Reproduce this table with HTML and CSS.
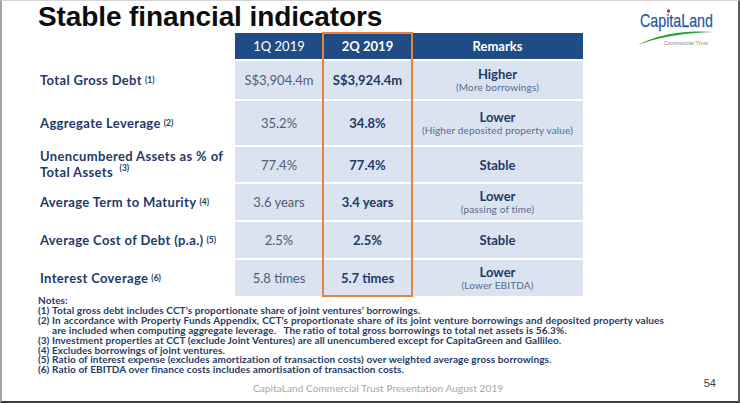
FILE: index.html
```html
<!DOCTYPE html>
<html lang="en">
<head>
<meta charset="utf-8">
<title>Stable financial indicators</title>
<link rel="stylesheet" href="styles.css">
</head>
<body>
<div class="slide">
  <header class="top">
    <h1 class="title">Stable financial indicators</h1>
    <svg class="logo" width="84" height="42" viewBox="0 0 84 42" aria-label="CapitaLand Commercial Trust">
      <text x="6" y="19" class="logo-name" textLength="73" lengthAdjust="spacingAndGlyphs">CapitaLand</text>
      <circle cx="34.5" cy="3" r="1.7" fill="#e0262b"/>
      <path d="M4 37.5 C18 28 48 21.5 80 24 C48 24.8 20 30 4 37.5 Z" fill="#2e9e3a"/>
      <text x="30" y="37" class="logo-sub" textLength="44" lengthAdjust="spacingAndGlyphs">Commercial Trust</text>
    </svg>
  </header>

  <div class="table-wrap">
    <div class="table">
      <div class="corner"></div>
      <div class="th">1Q 2019</div>
      <div class="th th-b">2Q 2019</div>
      <div class="th th-b">Remarks</div>

      <div class="lbl">Total Gross Debt <sup>(1)</sup></div>
      <div class="c1">S$3,904.4m</div>
      <div class="c2">S$3,924.4m</div>
      <div class="rm"><b>Higher</b><span>(More borrowings)</span></div>

      <div class="lbl">Aggregate Leverage <sup>(2)</sup></div>
      <div class="c1">35.2%</div>
      <div class="c2">34.8%</div>
      <div class="rm"><b>Lower</b><span>(Higher deposited property value)</span></div>

      <div class="lbl lbl-2">Unencumbered Assets as % of<br>Total Assets <sup>(3)</sup></div>
      <div class="c1">77.4%</div>
      <div class="c2">77.4%</div>
      <div class="rm"><b>Stable</b></div>

      <div class="lbl">Average Term to Maturity <sup>(4)</sup></div>
      <div class="c1">3.6 years</div>
      <div class="c2">3.4 years</div>
      <div class="rm"><b>Lower</b><span>(passing of time)</span></div>

      <div class="lbl">Average Cost of Debt (p.a.) <sup>(5)</sup></div>
      <div class="c1">2.5%</div>
      <div class="c2">2.5%</div>
      <div class="rm"><b>Stable</b></div>

      <div class="lbl">Interest Coverage <sup>(6)</sup></div>
      <div class="c1">5.8 times</div>
      <div class="c2">5.7 times</div>
      <div class="rm"><b>Lower</b><span>(Lower EBITDA)</span></div>
    </div>
    <div class="hl"></div>
  </div>

  <div class="notes">
    <p class="notes-h">Notes:</p>
    <ol class="notes-list">
      <li><span class="num">(1)</span>Total gross debt includes CCT’s proportionate share of joint ventures’ borrowings.</li>
      <li><span class="first"><span class="num">(2)</span>In accordance with Property Funds Appendix, CCT’s proportionate share of its joint venture borrowings and deposited property values</span><span class="rest">are included when computing aggregate leverage.&nbsp;&nbsp; The ratio of total gross borrowings to total net assets is 56.3%.</span></li>
      <li><span class="num">(3)</span>Investment properties at CCT (exclude Joint Ventures) are all unencumbered except for CapitaGreen and Gallileo.</li>
      <li><span class="num">(4)</span>Excludes borrowings of joint ventures.</li>
      <li><span class="num">(5)</span>Ratio of interest expense (excludes amortization of transaction costs) over weighted average gross borrowings.</li>
      <li><span class="num">(6)</span>Ratio of EBITDA over finance costs includes amortisation of transaction costs.</li>
    </ol>
  </div>

  <footer class="foot">
    <span class="foot-text">CapitaLand Commercial Trust Presentation August 2019</span>
    <span class="page">54</span>
  </footer>
</div>
</body>
</html>
```

FILE: styles.css
```css
html, body {
  margin: 0;
  padding: 0;
  background: #ffffff;
}

.slide {
  box-sizing: border-box;
  width: 740px;
  height: 403px;
  border-top: 1px solid #d4d4d4;
  border-left: 2px solid #a3a3a3;
  border-right: 2px solid #5a5a5a;
  border-bottom: 2px solid #3c3c3c;
  display: flex;
  flex-direction: column;
  font-family: Lato, "Open Sans", Arial, sans-serif;
  overflow: hidden;
}

/* ---------- header ---------- */
.top {
  display: flex;
  justify-content: space-between;
  align-items: flex-start;
  height: 32px;
  flex: none;
}

.title {
  margin: 0;
  padding-left: 36px;
  font-family: "Liberation Sans", Arial, sans-serif;
  font-weight: bold;
  font-size: 28px;
  line-height: 32px;
  color: #0d0d0d;
  letter-spacing: -0.1px;
}

.logo {
  display: block;
  margin-top: 7px;
  margin-right: 20px;
  flex: none;
  overflow: visible;
}

.logo-name {
  font-family: "Liberation Sans", Arial, sans-serif;
  font-size: 19px;
  fill: #1e5aa0;
  stroke: #1e5aa0;
  stroke-width: 0.25;
}

.logo-sub {
  font-family: "Liberation Sans", Arial, sans-serif;
  font-size: 5.5px;
  fill: #8a8a8a;
}

/* ---------- table ---------- */
.table-wrap {
  position: relative;
  margin-left: 38px;
  width: 543px;
  flex: none;
}

.table {
  display: grid;
  grid-template-columns: 195px 88px 89px 171px;
  grid-template-rows: 26px 38px 44px 35px 36px 36px 36px;
  row-gap: 2px;
}

.th {
  background: #1f4c84;
  color: #ffffff;
  font-size: 13px;
  display: flex;
  align-items: center;
  justify-content: center;
}

.th-b {
  font-weight: bold;
}

.lbl {
  display: flex;
  align-items: center;
  font-size: 13px;
  font-weight: bold;
  color: #1f3a69;
  line-height: 15px;
  letter-spacing: 0.35px;
  white-space: nowrap;
}

.lbl-2 {
  display: block;
  align-self: center;
  line-height: 15.5px;
}

.lbl sup {
  font-size: 8.5px;
  line-height: 0;
  vertical-align: 6px;
  margin-left: 3px;
  letter-spacing: 0;
}

.c1, .c2, .rm {
  background: #dae3ef;
  display: flex;
  flex-direction: column;
  align-items: center;
  justify-content: center;
  text-align: center;
}

.c1 {
  font-size: 13px;
  color: #4f5d78;
}

.c2 {
  font-size: 13px;
  font-weight: bold;
  color: #1f3a69;
}

.rm b {
  font-size: 13px;
  line-height: 14px;
  color: #1f3a69;
}

.rm span {
  font-size: 10px;
  line-height: 12px;
  letter-spacing: 0.15px;
  color: #566b8f;
}

/* orange highlight frame drawn over the 2Q 2019 column */
.hl {
  position: absolute;
  top: -1px;
  bottom: -1px;
  left: 282px;
  width: 91px;
  box-sizing: border-box;
  border: 2px solid #e6853a;
  pointer-events: none;
}

/* ---------- notes ---------- */
.notes {
  margin-left: 36px;
  width: 626px;
  font-size: 10px;
  line-height: 9.9px;
  letter-spacing: 0.1px;
  font-weight: bold;
  color: #1f3a69;
  flex: none;
}

.notes-h {
  margin: 0;
}

.notes-list {
  list-style: none;
  margin: 0;
  padding: 0;
}

.notes-list li {
  padding-left: 14px;
  text-indent: -14px;
}

.notes-list .num {
  display: inline-block;
  width: 14px;
  text-indent: 0;
  letter-spacing: 0;
}

.notes-list .first {
  display: block;
  white-space: nowrap;
  text-align: justify;
  text-align-last: justify;
}

.notes-list .rest {
  display: block;
  text-indent: 0;
}

/* ---------- footer ---------- */
.foot {
  margin-top: auto;
  display: flex;
  align-items: flex-start;
  height: 24px;
  flex: none;
}

.foot-text {
  margin-left: 251px;
  margin-top: 5px;
  font-size: 10px;
  line-height: 12px;
  color: #a6a6a6;
  letter-spacing: 0.1px;
}

.page {
  margin-left: auto;
  margin-right: 22px;
  font-family: "Liberation Sans", Arial, sans-serif;
  font-size: 11px;
  line-height: 12px;
  color: #404040;
}
```
